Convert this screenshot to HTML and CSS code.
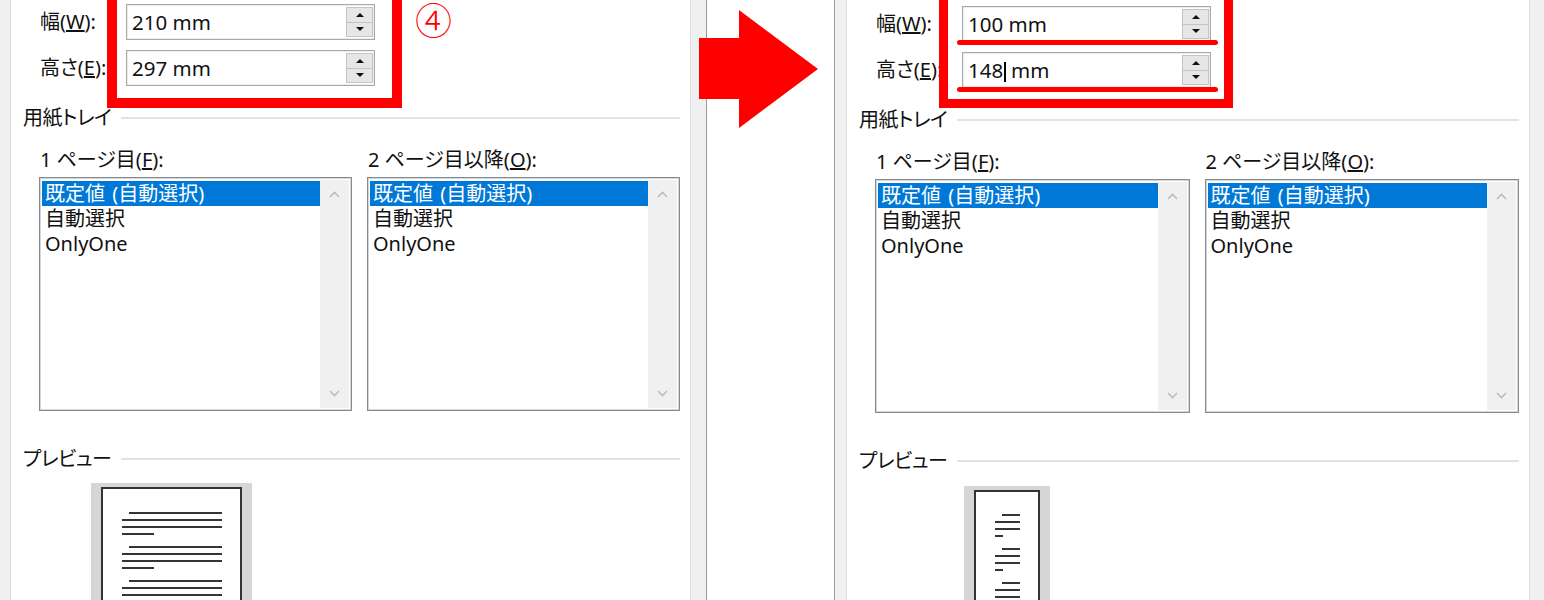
FILE: index.html
```html
<!DOCTYPE html>
<html lang="ja">
<head>
<meta charset="utf-8">
<title>用紙サイズ</title>
<link rel="stylesheet" href="styles.css">
</head>
<body>
<div class="screen">
  <section class="dialog dialog-a">
    <div class="size-row">
      <span class="lbl">幅(<u>W</u>):</span>
      <div class="field"><span class="val">210 mm</span><div class="spin"><span class="sb"><i class="tri-up"></i></span><span class="sb"><i class="tri-dn"></i></span></div></div>
    </div>
    <div class="size-row">
      <span class="lbl">高さ(<u>E</u>):</span>
      <div class="field"><span class="val">297 mm</span><div class="spin"><span class="sb"><i class="tri-up"></i></span><span class="sb"><i class="tri-dn"></i></span></div></div>
    </div>
    <div class="group"><span class="group-title">用紙トレイ</span><span class="rule"></span></div>
    <div class="trays">
      <div class="tray">
        <div class="tray-lbl">1 ページ目(<u>F</u>):</div>
        <div class="list">
          <ul class="items"><li class="sel">既定値 (自動選択)</li><li>自動選択</li><li>OnlyOne</li></ul>
          <div class="sbar">
            <span class="sbtn"><svg width="11" height="7" viewBox="0 0 11 7"><polyline points="1,6 5.5,1.5 10,6" fill="none" stroke="#bdbdbd" stroke-width="1.6"/></svg></span>
            <span class="sbtn"><svg width="11" height="7" viewBox="0 0 11 7"><polyline points="1,1 5.5,5.5 10,1" fill="none" stroke="#bdbdbd" stroke-width="1.6"/></svg></span>
          </div>
        </div>
      </div>
      <div class="tray">
        <div class="tray-lbl">2 ページ目以降(<u>O</u>):</div>
        <div class="list">
          <ul class="items"><li class="sel">既定値 (自動選択)</li><li>自動選択</li><li>OnlyOne</li></ul>
          <div class="sbar">
            <span class="sbtn"><svg width="11" height="7" viewBox="0 0 11 7"><polyline points="1,6 5.5,1.5 10,6" fill="none" stroke="#bdbdbd" stroke-width="1.6"/></svg></span>
            <span class="sbtn"><svg width="11" height="7" viewBox="0 0 11 7"><polyline points="1,1 5.5,5.5 10,1" fill="none" stroke="#bdbdbd" stroke-width="1.6"/></svg></span>
          </div>
        </div>
      </div>
    </div>
    <div class="group group-preview"><span class="group-title">プレビュー</span><span class="rule"></span></div>
    <div class="preview-area">
      <div class="preview">
        <div class="page page-a4">
          <div class="para"><span class="ln ind"></span><span class="ln"></span><span class="ln"></span><span class="ln short"></span></div>
          <div class="para"><span class="ln ind"></span><span class="ln"></span><span class="ln"></span><span class="ln short"></span></div>
          <div class="para"><span class="ln ind"></span><span class="ln"></span><span class="ln"></span><span class="ln short"></span></div>
        </div>
      </div>
    </div>
    <div class="mark-box mark-a"></div>
    <div class="step">④</div>
  </section>

  <div class="middle">
    <svg class="arrow" width="119" height="118" viewBox="0 0 119 118"><polygon points="0,28 40,28 40,0 119,59 40,118 40,89 0,89" fill="#ff0000"/></svg>
  </div>

  <section class="dialog dialog-b">
    <div class="size-row">
      <span class="lbl">幅(<u>W</u>):</span>
      <div class="field"><span class="val">100 mm</span><div class="spin"><span class="sb"><i class="tri-up"></i></span><span class="sb"><i class="tri-dn"></i></span></div></div>
    </div>
    <div class="size-row">
      <span class="lbl">高さ(<u>E</u>):</span>
      <div class="field"><span class="val">148<span class="caret"></span> mm</span><div class="spin"><span class="sb"><i class="tri-up"></i></span><span class="sb"><i class="tri-dn"></i></span></div></div>
    </div>
    <div class="group"><span class="group-title">用紙トレイ</span><span class="rule"></span></div>
    <div class="trays">
      <div class="tray">
        <div class="tray-lbl">1 ページ目(<u>F</u>):</div>
        <div class="list">
          <ul class="items"><li class="sel">既定値 (自動選択)</li><li>自動選択</li><li>OnlyOne</li></ul>
          <div class="sbar">
            <span class="sbtn"><svg width="11" height="7" viewBox="0 0 11 7"><polyline points="1,6 5.5,1.5 10,6" fill="none" stroke="#bdbdbd" stroke-width="1.6"/></svg></span>
            <span class="sbtn"><svg width="11" height="7" viewBox="0 0 11 7"><polyline points="1,1 5.5,5.5 10,1" fill="none" stroke="#bdbdbd" stroke-width="1.6"/></svg></span>
          </div>
        </div>
      </div>
      <div class="tray">
        <div class="tray-lbl">2 ページ目以降(<u>O</u>):</div>
        <div class="list">
          <ul class="items"><li class="sel">既定値 (自動選択)</li><li>自動選択</li><li>OnlyOne</li></ul>
          <div class="sbar">
            <span class="sbtn"><svg width="11" height="7" viewBox="0 0 11 7"><polyline points="1,6 5.5,1.5 10,6" fill="none" stroke="#bdbdbd" stroke-width="1.6"/></svg></span>
            <span class="sbtn"><svg width="11" height="7" viewBox="0 0 11 7"><polyline points="1,1 5.5,5.5 10,1" fill="none" stroke="#bdbdbd" stroke-width="1.6"/></svg></span>
          </div>
        </div>
      </div>
    </div>
    <div class="group group-preview"><span class="group-title">プレビュー</span><span class="rule"></span></div>
    <div class="preview-area">
      <div class="preview">
        <div class="page page-small">
          <div class="para"><span class="ln ind"></span><span class="ln"></span><span class="ln"></span><span class="ln short"></span></div>
          <div class="para"><span class="ln ind"></span><span class="ln"></span><span class="ln"></span><span class="ln short"></span></div>
          <div class="para"><span class="ln ind"></span><span class="ln"></span><span class="ln"></span><span class="ln short"></span></div>
        </div>
      </div>
    </div>
    <div class="mark-box mark-b"></div>
    <div class="uline uline-1"></div>
    <div class="uline uline-2"></div>
  </section>
</div>
</body>
</html>
```

FILE: styles.css
```css
html, body {
  margin: 0;
  padding: 0;
}

body {
  background: #f0f0f0;
  font-family: "Noto Sans", "Noto Sans CJK JP", sans-serif;
  font-feature-settings: "palt";
  font-size: 20px;
  color: #111;
}

.screen {
  display: flex;
  align-items: stretch;
  height: 600px;
  overflow: hidden;
  background: #f0f0f0;
}

.dialog {
  position: relative;
  box-sizing: border-box;
  height: 600px;
  background: #fff;
  border-left: 1px solid #dcdcdc;
  border-right: 1px solid #dcdcdc;
  padding: 4px 10px 0 12px;
  overflow: hidden;
}

.dialog-a {
  margin-left: 10px;
  width: 681px;
}

.dialog-b {
  margin-left: 11px;
  width: 684px;
  padding-top: 6px;
}

.middle {
  position: relative;
  box-sizing: border-box;
  margin-left: 15px;
  width: 129px;
  height: 600px;
  background: #fff;
  border-left: 1px solid #9a9a9a;
  border-right: 1px solid #9a9a9a;
}

.arrow {
  position: absolute;
  left: -8px;
  top: 10px;
  display: block;
}

/* size rows */
.size-row {
  display: flex;
  align-items: center;
  margin-left: 17px;
  height: 36px;
}

.size-row + .size-row {
  margin-top: 10px;
}

.lbl {
  width: 86px;
  flex: none;
  line-height: 24px;
  white-space: nowrap;
}

.field {
  box-sizing: border-box;
  display: flex;
  align-items: stretch;
  width: 249px;
  height: 36px;
  padding: 2px 1px 2px 5px;
  border: 1px solid #a9a9a9;
  box-shadow: inset 0 0 0 1px #ececec;
  background: #fff;
}

.val {
  flex: 1;
  align-self: center;
  font-size: 20.5px;
  line-height: 24px;
  color: #111;
  white-space: nowrap;
}

.caret {
  display: inline-block;
  width: 1.5px;
  height: 20px;
  margin-left: 1px;
  background: #000;
  vertical-align: -4px;
}

.spin {
  display: flex;
  flex-direction: column;
  width: 27px;
  flex: none;
}

.sb {
  flex: 1;
  display: flex;
  align-items: center;
  justify-content: center;
  background: #e6e6e6;
  border: 1px solid #c4c4c4;
}

.sb + .sb {
  border-top: none;
}

.tri-up,
.tri-dn {
  display: block;
  width: 0;
  height: 0;
  border-left: 4px solid transparent;
  border-right: 4px solid transparent;
}

.tri-up {
  border-bottom: 4px solid #111;
}

.tri-dn {
  border-top: 4px solid #111;
}

/* group header */
.group {
  display: flex;
  align-items: center;
  gap: 10px;
  margin-top: 20px;
  height: 24px;
}

.group-title {
  line-height: 24px;
  white-space: nowrap;
  letter-spacing: -0.5px;
}

.rule {
  flex: 1;
  height: 2px;
  background: #e3e3e3;
  margin-right: 0;
}

.group-preview {
  margin-top: 36px;
}

/* trays */
.trays {
  display: grid;
  grid-template-columns: 1fr 1fr;
  column-gap: 15px;
  margin-top: 18px;
  margin-left: 16px;
}

.tray-lbl {
  line-height: 24px;
  padding-left: 1px;
  white-space: nowrap;
}

.list {
  box-sizing: border-box;
  display: flex;
  height: 234px;
  margin-top: 5px;
  padding: 2px;
  border: 1px solid #868a91;
  box-shadow: inset 0 0 0 1px #d3d5d9;
  background: #fff;
}

.items {
  flex: 1;
  list-style: none;
  margin: 0;
  padding: 1px 0 0 0;
}

.items li {
  height: 25px;
  line-height: 25px;
  padding-left: 3px;
  white-space: nowrap;
  color: #111;
  word-spacing: 2px;
}

.items li.sel {
  background: #0078d7;
  color: #fff;
}

.sbar {
  width: 29px;
  flex: none;
  display: flex;
  flex-direction: column;
  justify-content: space-between;
  background: #f0f0f0;
}

.sbtn {
  height: 29px;
  display: flex;
  align-items: center;
  justify-content: center;
}

.sbtn svg {
  display: block;
}

/* preview */
.preview-area {
  display: flex;
  justify-content: center;
  width: 296px;
  margin-top: 12px;
}

.dialog-b .preview-area {
  margin-top: 13px;
}

.preview {
  background: #d6d6d6;
  padding: 4px 10px 0 10px;
  height: 200px;
}

.page {
  box-sizing: border-box;
  height: 220px;
  background: #fff;
  border: 2px solid #333;
  padding: 23px 18px 0 19px;
}

.page-a4 {
  width: 141px;
}

.page-small {
  width: 66px;
  padding-top: 22px;
}

.para {
  display: flex;
  flex-direction: column;
  gap: 5px;
}

.para + .para {
  margin-top: 11px;
}

.ln {
  display: block;
  height: 2px;
  background: #353535;
}

.ln.ind {
  margin-left: 7px;
}

.ln.short {
  width: 32%;
}

/* annotations */
.mark-box {
  position: absolute;
  box-sizing: border-box;
  top: -20px;
  height: 128px;
  border: 10px solid #ff0000;
}

.mark-a {
  left: 96px;
  width: 295px;
}

.mark-b {
  left: 92px;
  width: 294px;
  border-width: 9px;
}

.uline {
  position: absolute;
  left: 110px;
  width: 261px;
  height: 5px;
  border-radius: 3px;
  background: #ff0000;
}

.uline-1 {
  top: 40px;
}

.uline-2 {
  top: 87px;
}

.step {
  position: absolute;
  left: 404px;
  top: 1px;
  font-family: "Noto Sans CJK JP", sans-serif;
  font-weight: 300;
  font-size: 37px;
  line-height: 37px;
  color: #ff0000;
}
```
